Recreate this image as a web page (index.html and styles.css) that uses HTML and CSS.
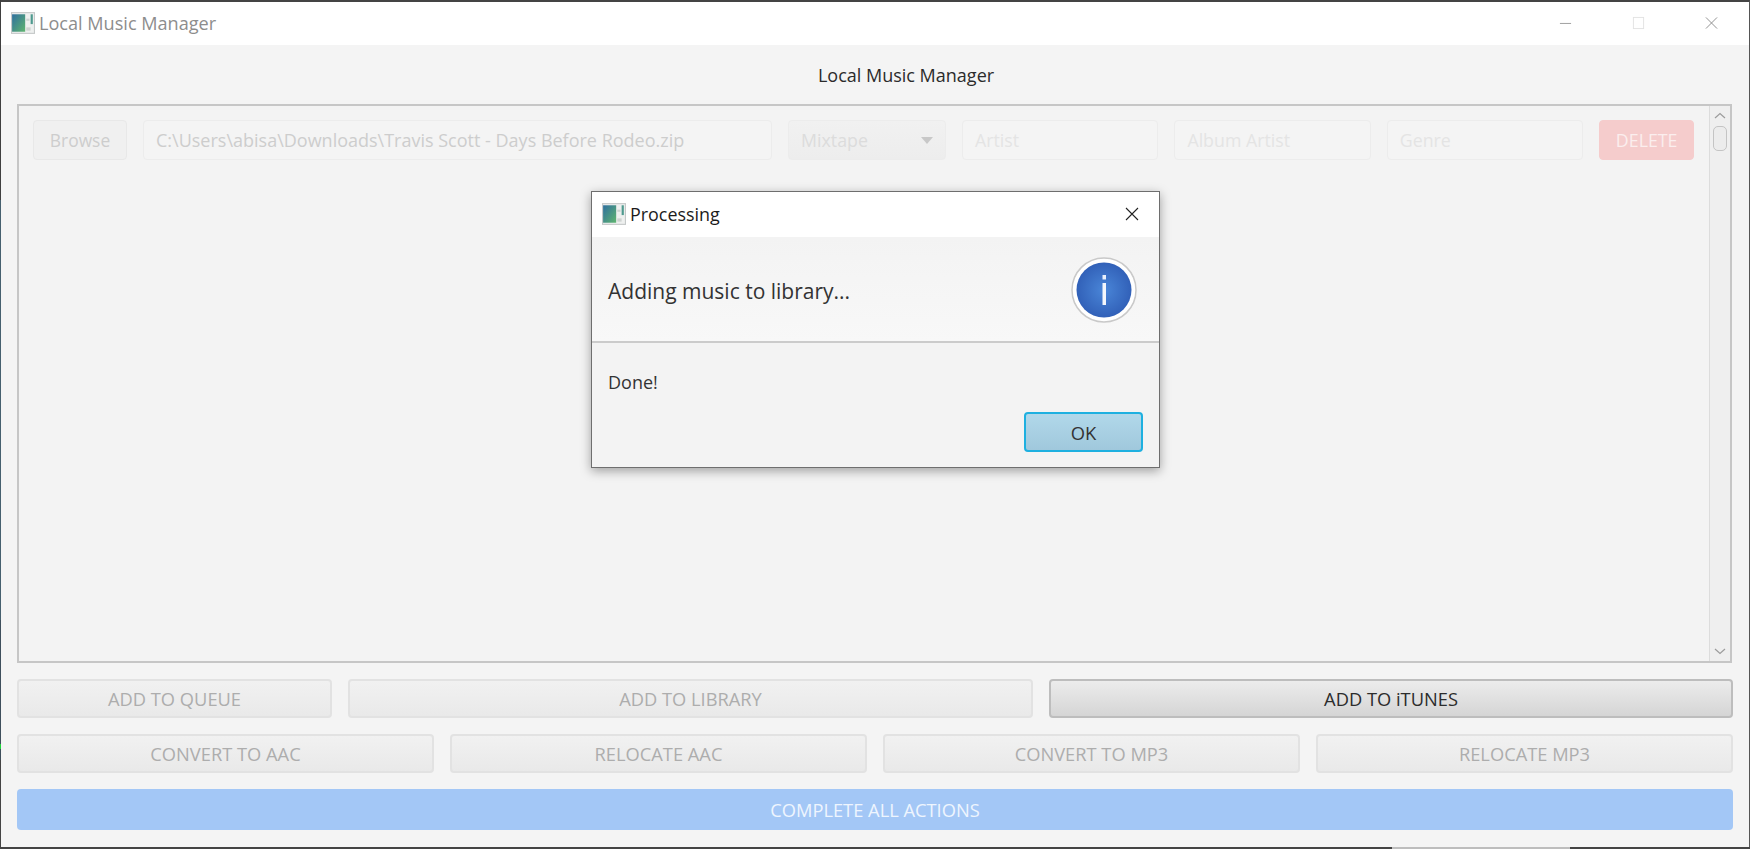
FILE: index.html
```html
<!DOCTYPE html>
<html lang="en">
<head>
<meta charset="utf-8">
<title>Local Music Manager</title>
<link rel="stylesheet" href="styles.css">
</head>
<body>
<div class="window">
  <header class="titlebar">
    <svg class="appicon" viewBox="0 0 22 20"><defs><linearGradient id="g1" x1="0" y1="0" x2="1" y2="1"><stop offset="0" stop-color="#2f6f9e"/><stop offset="1" stop-color="#5fb56f"/></linearGradient></defs><rect width="22" height="20" fill="#c4c8c8"/><rect x="1" y="1" width="20" height="18" fill="#eef0ef"/><rect x="1" y="2" width="12" height="16" fill="url(#g1)"/><rect x="14" y="6" width="3" height="2" fill="#cfd3d2"/><rect x="14" y="14" width="4" height="3" fill="#cfd3d2"/><rect x="18" y="2" width="2" height="9" fill="#4f9a8f"/></svg>
    <span class="wintitle">Local Music Manager</span>
    <div class="wincontrols">
      <svg class="winbtn" viewBox="0 0 14 14"><path d="M1 7.5H13" stroke="#9a9a9a" fill="none"/></svg>
      <svg class="winbtn" viewBox="0 0 14 14"><rect x="1.5" y="1" width="11" height="12" stroke="#e2e2e2" fill="none"/></svg>
      <svg class="winbtn" viewBox="0 0 14 14"><path d="M1 1L13 13M13 1L1 13" stroke="#8a8a8a" fill="none"/></svg>
    </div>
  </header>
  <main class="content">
    <h1 class="heading">Local Music Manager</h1>
    <section class="panel">
      <div class="panelbody">
        <div class="row">
          <span class="ctl browse">Browse</span>
          <span class="ctl field path">C:\Users\abisa\Downloads\Travis Scott - Days Before Rodeo.zip</span>
          <span class="ctl combo">Mixtape<i class="caret"></i></span>
          <span class="ctl field meta">Artist</span>
          <span class="ctl field meta">Album Artist</span>
          <span class="ctl field meta">Genre</span>
          <span class="ctl delete">DELETE</span>
        </div>
      </div>
      <div class="scrollbar">
        <svg class="arrow" viewBox="0 0 12 8"><path d="M1 6L6 1.5L11 6" stroke="#9c9c9c" stroke-width="1.2" fill="none"/></svg>
        <div class="thumb"></div>
        <div class="track"></div>
        <svg class="arrow" viewBox="0 0 12 8"><path d="M1 2L6 6.5L11 2" stroke="#9c9c9c" stroke-width="1.2" fill="none"/></svg>
      </div>
    </section>
    <div class="actions">
      <div class="bar bar-top">
        <button class="btn off">ADD TO QUEUE</button>
        <button class="btn off">ADD TO LIBRARY</button>
        <button class="btn on">ADD TO iTUNES</button>
      </div>
      <div class="bar bar-mid">
        <button class="btn off">CONVERT TO AAC</button>
        <button class="btn off">RELOCATE AAC</button>
        <button class="btn off">CONVERT TO MP3</button>
        <button class="btn off">RELOCATE MP3</button>
      </div>
      <button class="btn complete">COMPLETE ALL ACTIONS</button>
    </div>
  </main>
  <div class="dialog">
    <header class="dlgtitle">
      <svg class="appicon" viewBox="0 0 22 20"><rect width="22" height="20" fill="#c4c8c8"/><rect x="1" y="1" width="20" height="18" fill="#eef0ef"/><rect x="1" y="2" width="12" height="16" fill="url(#g1)"/><rect x="14" y="6" width="3" height="2" fill="#cfd3d2"/><rect x="14" y="14" width="4" height="3" fill="#cfd3d2"/><rect x="18" y="2" width="2" height="9" fill="#4f9a8f"/></svg>
      <span class="dlgname">Processing</span>
      <svg class="dlgclose" viewBox="0 0 14 14"><path d="M1 1L13 13M13 1L1 13" stroke="#222" stroke-width="1.1" fill="none"/></svg>
    </header>
    <div class="dlghead">
      <span class="dlgmsg">Adding music to library...</span>
      <svg class="info" viewBox="0 0 66 66"><defs><radialGradient id="g2" cx=".5" cy=".5" r=".55"><stop offset="0" stop-color="#4a86d8"/><stop offset="1" stop-color="#2f5db5"/></radialGradient></defs><circle cx="33" cy="33" r="32" fill="#fff" stroke="#c9c9c9" stroke-width="1.5"/><circle cx="33" cy="33" r="27.5" fill="url(#g2)"/><rect x="31.5" y="18" width="3.5" height="4.5" fill="#e9f0fb"/><rect x="31.5" y="26" width="3.5" height="22" fill="#f4f7fc"/></svg>
    </div>
    <div class="dlgbody">
      <p class="dlgtext">Done!</p>
      <div class="dlgfoot"><button class="okbtn">OK</button></div>
    </div>
  </div>
</div>
</body>
</html>
```
FILE: styles.css
```css
* { box-sizing: border-box; }
html, body { margin: 0; height: 100%; }
body {
  font-family: "Open Sans", "Noto Sans", "Liberation Sans", sans-serif;
  overflow: hidden;
  background:
    linear-gradient(#bdbdbd, #bdbdbd) 1392px 847px / 178px 2px no-repeat,
    linear-gradient(#1fd23c, #1fd23c) 0 744px / 1px 5px no-repeat,
    linear-gradient(#3f3f3f 200px, #46606f 200px, #46606f 620px, #3e4f5c 620px, #3e4f5c 760px, #444 760px);
  padding: 0 0 0 1px;
}
.window {
  position: relative;
  width: 1749px;
  height: 847px;
  display: flex;
  flex-direction: column;
  border-top: 2px solid #444;
  border-right: 1px solid #555;
  background: #f4f4f4;
}
.titlebar {
  height: 43px;
  flex: none;
  background: #fff;
  display: flex;
  align-items: center;
  padding: 0 0 2px 10px;
}
.appicon { width: 24px; height: 22px; flex: none; }
.wintitle { margin-left: 4px; font-size: 18.1px; color: #8d8d8d; }
.wincontrols { margin-left: auto; display: flex; gap: 60px; padding-right: 31px; align-items: center; }
.winbtn { width: 13px; height: 14px; display: block; }
.content {
  flex: 1;
  display: flex;
  flex-direction: column;
  padding: 0 16px 17px 16px;
  min-height: 0;
}
.heading {
  margin: 0;
  height: 59px;
  flex: none;
  padding-left: 62px;
  font-weight: 400;
  font-size: 18px;
  color: #2b2b2b;
  text-align: center;
  line-height: 60px;
}
.panel {
  flex: 1;
  min-height: 0;
  display: flex;
  margin-right: 1px;
  border: 2px solid #c6c6c6;
  background: #f3f3f3;
}
.panelbody { flex: 1; padding: 14px 14px 0 14px; }
.row { display: flex; gap: 16px; height: 40px; align-items: stretch; }
.ctl {
  display: flex;
  align-items: center;
  font-size: 17.8px;
  border: 1px solid #ececec;
  border-radius: 4px;
  background: #f4f4f4;
  color: #cdcdcd;
  white-space: nowrap;
}
.browse { width: 94px; justify-content: center; font-size: 17.4px; background: #f0f0f0; border-color: #e8e8e8; }
.path { width: 629px; padding-left: 12px; font-size: 18px; }
.combo { width: 158px; padding-left: 12px; background: linear-gradient(#f1f1f1, #ededed); color: #dcdcdc; position: relative; }
.caret { position: absolute; right: 12px; top: 16px; border: 6px solid transparent; border-top: 7px solid #c8c8c8; border-bottom: 0; }
.meta { width: 196.4px; padding-left: 12px; color: #e4e4e4; }
.delete { width: 95px; justify-content: center; background: #f5cccc; border-color: #f5cccc; color: #fbeeee; }
.scrollbar {
  width: 21px;
  flex: none;
  display: flex;
  flex-direction: column;
  align-items: center;
  background: #efefef;
  border-left: 1px solid #dcdcdc;
}
.arrow { width: 12px; height: 8px; flex: none; margin: 6px 0; }
.thumb { width: 14px; height: 25px; flex: none; border: 1px solid #c4c4c4; border-radius: 5px; background: #ececec; }
.track { flex: 1; }
.actions { flex: none; display: flex; flex-direction: column; gap: 16px; padding-top: 16px; }
.bar { display: grid; gap: 16px; height: 39px; }
.bar-top { grid-template-columns: 315px 685px 1fr; }
.bar-mid { grid-template-columns: repeat(4, 1fr); }
.btn {
  font: inherit;
  font-size: 18.3px;
  padding: 0;
  border-radius: 4px;
  border: 2px solid #e2e2e2;
  background: linear-gradient(#f1f1f1, #e9e9e9);
  color: #adadad;
}
.on { border-color: #bdbdbd; background: linear-gradient(#ececec, #d5d5d5); color: #2c2c2c; }
.complete { height: 41px; border: 0; background: #a3c7f6; color: #eef5fe; }
.dialog {
  position: absolute;
  left: 590px;
  top: 189px;
  width: 569px;
  height: 277px;
  display: flex;
  flex-direction: column;
  border: 1px solid #6e6e6e;
  background: #f3f3f3;
  box-shadow: 0 3px 10px rgba(0,0,0,.35);
}
.dlgtitle { height: 45px; flex: none; background: #fff; display: flex; align-items: center; padding: 0 0 2px 10px; }
.dlgname { margin-left: 4px; font-size: 17.9px; color: #1b1b1b; }
.dlgclose { width: 14px; height: 14px; margin-left: auto; margin-right: 20px; }
.dlghead {
  height: 106px;
  flex: none;
  display: flex;
  align-items: center;
  justify-content: space-between;
  padding: 2px 22px 0 16px;
  background: linear-gradient(#f3f3f3, #f8f8f8);
  border-bottom: 2px solid #cbcbcb;
}
.dlgmsg { font-size: 21px; color: #333; margin-top: 2px; }
.info { width: 66px; height: 66px; flex: none; }
.dlgbody { flex: 1; display: flex; flex-direction: column; padding: 27px 16px 15px 16px; }
.dlgtext { margin: 0; font-size: 18px; line-height: 24px; color: #333; }
.dlgfoot { margin-top: auto; display: flex; justify-content: flex-end; }
.okbtn {
  width: 119px;
  height: 40px;
  padding: 0;
  font: inherit;
  font-size: 18.4px;
  color: #333;
  border: 2px solid #1eb0e0;
  border-radius: 4px;
  background: linear-gradient(#b1d8ea, #a0c8dc);
}
```
